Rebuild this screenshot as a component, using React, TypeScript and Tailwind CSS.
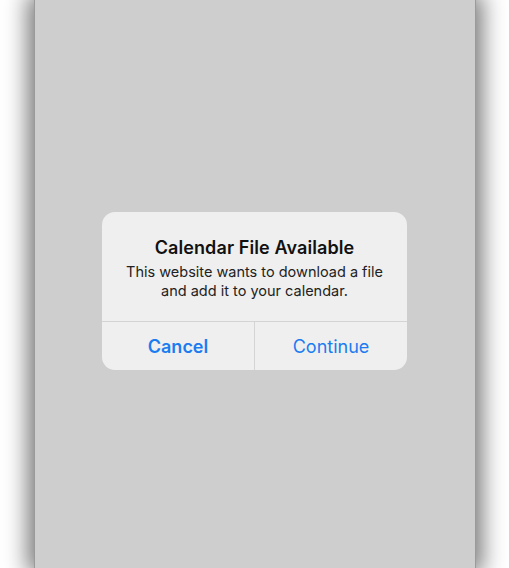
const App = () => {
  return (
    <div className="min-h-[568px] bg-white flex justify-center overflow-hidden font-['Inter','Liberation_Sans',sans-serif]">
      {/* Phone screen */}
      <div className="w-[442px] h-[568px] bg-[#cecece] border-x border-[#9a9a9a] shadow-[0_0_22px_6px_rgba(0,0,0,0.55)] flex flex-col items-center pt-[212px]">
        {/* Alert */}
        <div className="w-[305px] rounded-[13px] bg-[#efefef] overflow-hidden">
          <div className="flex flex-col items-center text-center pt-[25px] pb-[21px] px-4">
            <h2 className="text-[18px] leading-[22px] font-semibold text-[#111] tracking-[0.1px]">
              Calendar File Available
            </h2>
            <p className="mt-[3px] text-[14.5px] leading-[19px] text-[#222]">
              This website wants to download a file<br />
              and add it to your calendar.
            </p>
          </div>
          <div className="flex h-[49px] border-t border-[#d4d4d4]">
            <button className="flex-1 text-[18px] font-semibold text-[#1a7cf0]">
              Cancel
            </button>
            <div className="w-px bg-[#d4d4d4]" />
            <button className="flex-1 text-[18px] text-[#1a7cf0]">
              Continue
            </button>
          </div>
        </div>
      </div>
    </div>
  )
}

export default App
